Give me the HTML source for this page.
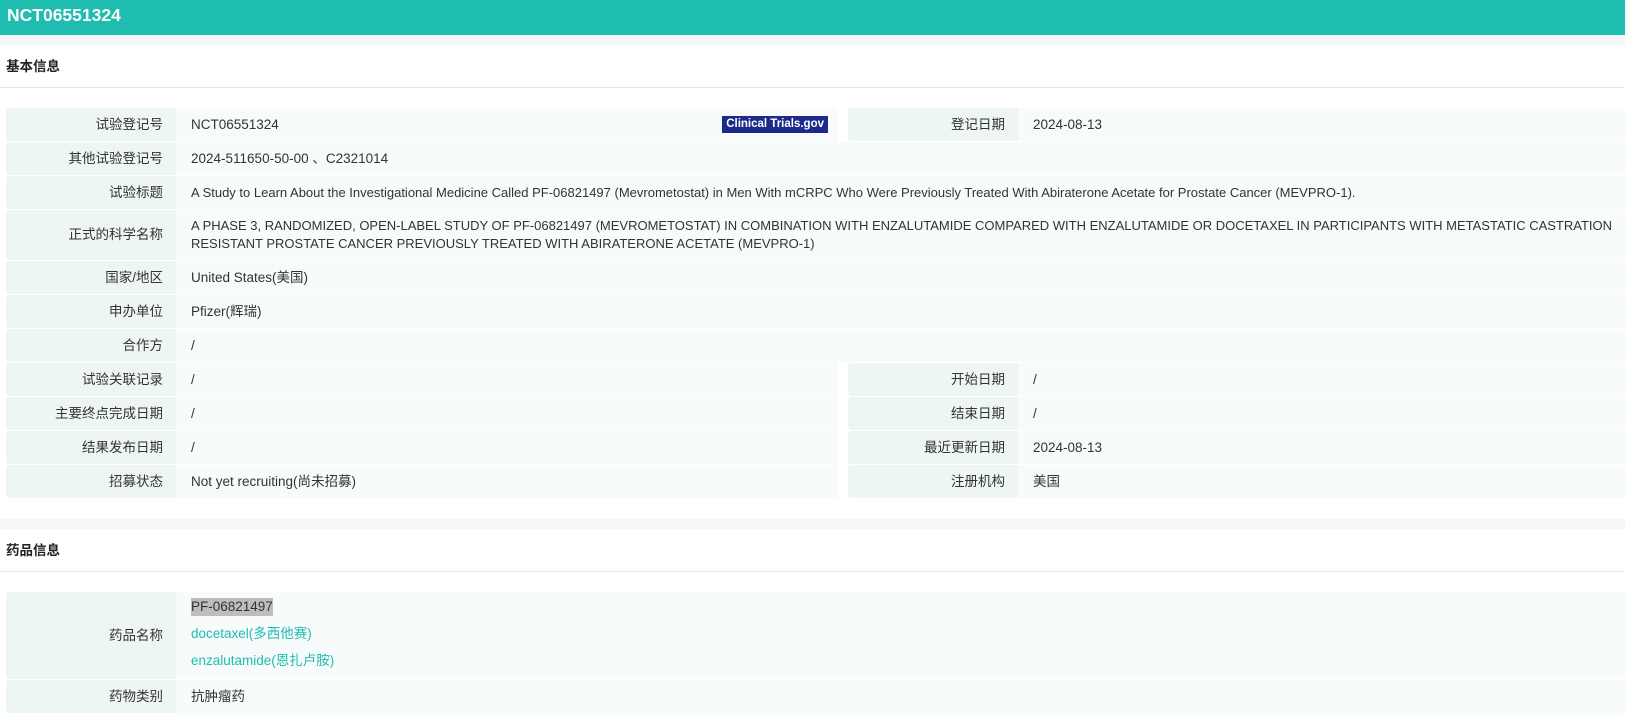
<!DOCTYPE html>
<html><head><meta charset="utf-8"><style>
*{margin:0;padding:0;box-sizing:border-box}
body{width:1625px;height:717px;overflow:hidden;background:#fff;font-family:"Liberation Sans","Noto Sans CJK SC",sans-serif;font-size:13.5px;color:#333}
.hd{height:35px;background:#1fbcb0;color:#fff;font-weight:bold;font-size:17.5px;line-height:30px;padding-left:7px}
.band{height:10px;background:#f5f6f8}
.st{height:43px;line-height:44px;padding-left:6px;font-weight:bold;font-size:13.5px;color:#222;border-bottom:1px solid #e5e5e5}
.tbl{position:relative;margin:20px 0 0 6px;width:1619px}
.r{display:flex;margin-bottom:1px}
.l{width:170px;background:#eef6f5;text-align:right;padding-right:13px;display:flex;align-items:center;justify-content:flex-end;border-radius:3px 0 0 3px;flex:none;line-height:18px}
.v{flex:1;background:#f8fbfb;padding-left:15px;display:flex;align-items:center;white-space:nowrap;position:relative;line-height:18px}
.h{height:33px}
.half{width:832px;flex:none;display:flex}
.gap{width:10px;flex:none;background:#fff}
.badge{position:absolute;right:10px;top:8px;background:#1e2a8a;color:#fff;font-size:11.5px;font-weight:bold;padding:1px 4px;line-height:15px}
.cy{color:#1fbcb0}
</style></head><body>
<div class="hd">NCT06551324</div>
<div class="band"></div>
<div class="st">基本信息</div>
<div class="tbl">
<div class="r h"><div class="half"><div class="l">试验登记号</div><div class="v">NCT06551324<span class="badge">Clinical Trials.gov</span></div></div><div class="gap"></div><div class="l">登记日期</div><div class="v">2024-08-13</div></div>
<div class="r h"><div class="l">其他试验登记号</div><div class="v">2024-511650-50-00 、C2321014</div></div>
<div class="r h"><div class="l">试验标题</div><div class="v" style="font-size:13px">A Study to Learn About the Investigational Medicine Called PF-06821497 (Mevrometostat) in Men With mCRPC Who Were Previously Treated With Abiraterone Acetate for Prostate Cancer (MEVPRO-1).</div></div>
<div class="r" style="height:50px"><div class="l">正式的科学名称</div><div class="v" style="font-size:13px;line-height:18px">A PHASE 3, RANDOMIZED, OPEN-LABEL STUDY OF PF-06821497 (MEVROMETOSTAT) IN COMBINATION WITH ENZALUTAMIDE COMPARED WITH ENZALUTAMIDE OR DOCETAXEL IN PARTICIPANTS WITH METASTATIC CASTRATION<br>RESISTANT PROSTATE CANCER PREVIOUSLY TREATED WITH ABIRATERONE ACETATE (MEVPRO-1)</div></div>
<div class="r h"><div class="l">国家/地区</div><div class="v">United States(美国)</div></div>
<div class="r h"><div class="l">申办单位</div><div class="v">Pfizer(辉瑞)</div></div>
<div class="r h"><div class="l">合作方</div><div class="v">/</div></div>
<div class="r h"><div class="half"><div class="l">试验关联记录</div><div class="v">/</div></div><div class="gap"></div><div class="l">开始日期</div><div class="v">/</div></div>
<div class="r h"><div class="half"><div class="l">主要终点完成日期</div><div class="v">/</div></div><div class="gap"></div><div class="l">结束日期</div><div class="v">/</div></div>
<div class="r h"><div class="half"><div class="l">结果发布日期</div><div class="v">/</div></div><div class="gap"></div><div class="l">最近更新日期</div><div class="v">2024-08-13</div></div>
<div class="r h"><div class="half"><div class="l">招募状态</div><div class="v">Not yet recruiting(尚未招募)</div></div><div class="gap"></div><div class="l">注册机构</div><div class="v">美国</div></div>
</div>
<div style="height:20px"></div>
<div class="band"></div>
<div class="st">药品信息</div>
<div class="tbl">
<div class="r" style="height:87px"><div class="l">药品名称</div><div class="v" style="flex-direction:column;align-items:flex-start;justify-content:center;line-height:27px"><span style="background:#bdbdbd;line-height:18px;margin-bottom:4px">PF-06821497</span><span class="cy">docetaxel(多西他赛)</span><span class="cy">enzalutamide(恩扎卢胺)</span></div></div>
<div class="r h"><div class="l">药物类别</div><div class="v">抗肿瘤药</div></div>
</div>
</body></html>
